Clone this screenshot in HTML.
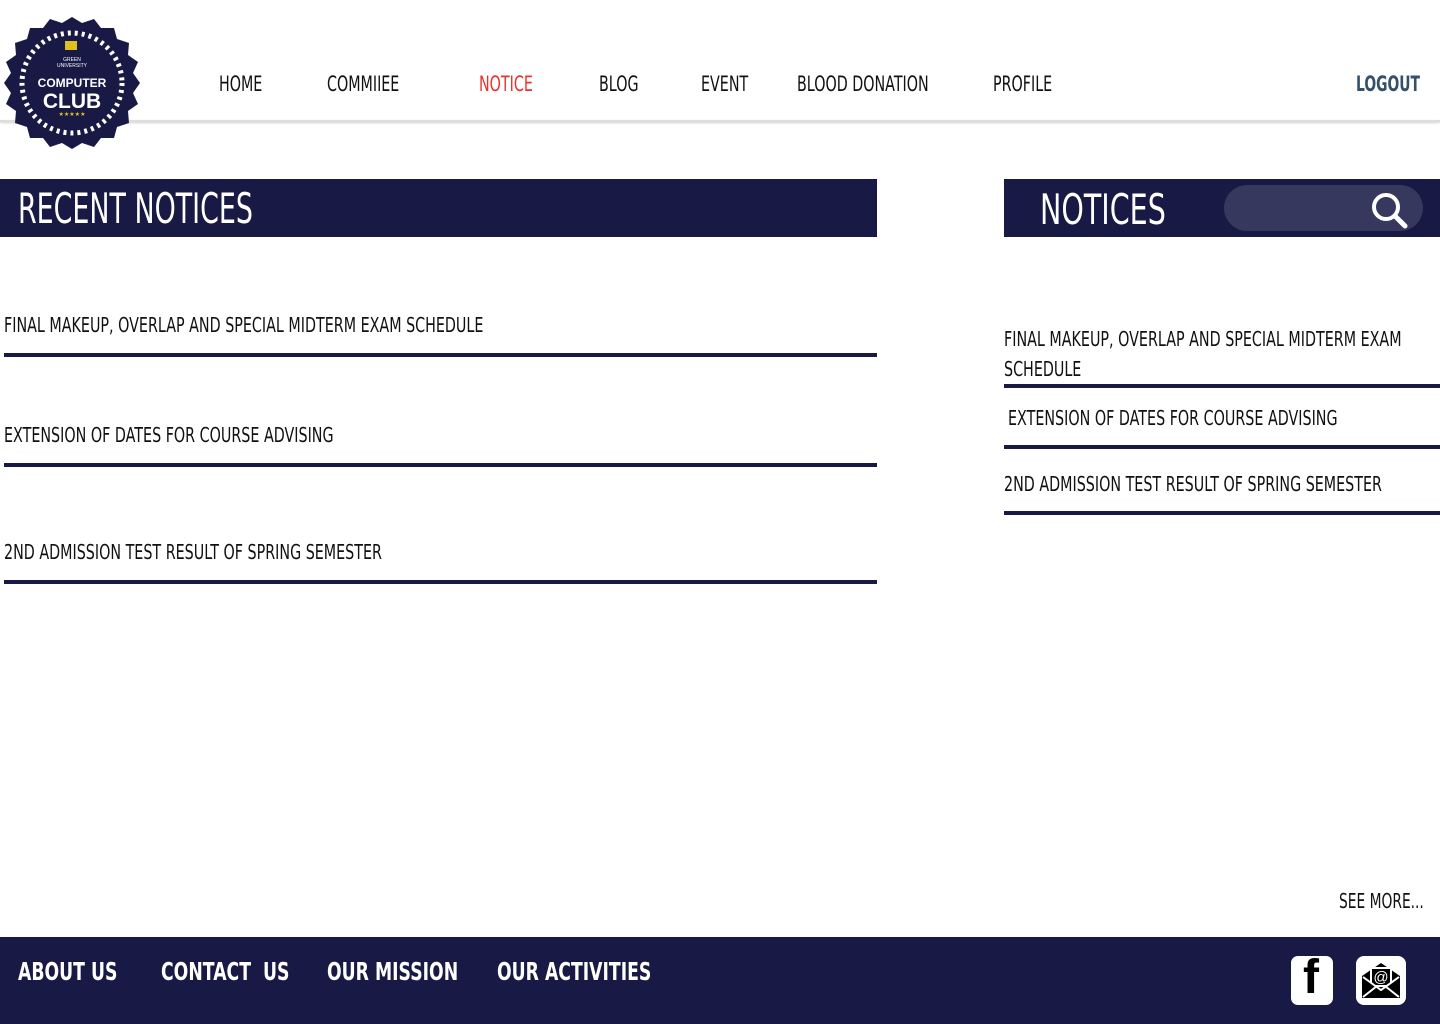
<!DOCTYPE html>
<html><head><meta charset="utf-8"><style>
*{margin:0;padding:0;box-sizing:border-box}
body{width:1440px;height:1024px;position:relative;background:#fff;overflow:hidden;font-family:"DejaVu Sans",sans-serif;color:#111}
.a{position:absolute;white-space:nowrap;transform-origin:0 0}
.nav{top:72px;font-size:21px;transform:scaleX(0.68)}
.bar{position:absolute;background:#181945}
.line{position:absolute;height:4px;background:#181945}
.it{font-size:20px;position:absolute;white-space:nowrap;transform:scaleX(0.715);transform-origin:0 0}
.ft{color:#fff;font-weight:bold;font-size:25px;top:957px;transform:scaleX(0.69)}
</style></head><body>
<div style="position:absolute;left:0;top:120px;width:1440px;height:2px;background:#ddd;box-shadow:0 1px 2px #ccc"></div>
<svg class="a" style="left:0;top:15px" width="144" height="136" viewBox="0 0 144 136">
<polygon fill="#181945" points="72,2 82,8 94,4 101,13 114,13 117,24 129,28 128,40 138,47 133,58 140,68 133,78 138,89 128,96 129,108 117,112 114,123 101,123 94,132 82,128 72,134 62,128 50,132 43,123 30,123 27,112 15,108 16,96 6,89 11,78 4,68 11,58 6,47 16,40 15,28 27,24 30,13 43,13 50,4 62,8"/>
<circle cx="72" cy="68" r="50" fill="none" stroke="#fff" stroke-width="5" stroke-dasharray="3 4"/>
<rect x="65" y="26" width="12" height="9" fill="#e0c020"/>
<text x="72" y="46" fill="#fff" font-size="5" text-anchor="middle" font-family="Liberation Sans">GREEN</text>
<text x="72" y="52" fill="#fff" font-size="5" text-anchor="middle" font-family="Liberation Sans">UNIVERSITY</text>
<text x="72" y="72" fill="#fff" font-size="12" font-weight="bold" text-anchor="middle" font-family="Liberation Sans">COMPUTER</text>
<text x="72" y="93" fill="#fff" font-size="21" font-weight="bold" text-anchor="middle" font-family="Liberation Sans">CLUB</text>
<text x="72" y="101" fill="#e0c020" font-size="6" text-anchor="middle">★★★★★</text>
</svg>
<div class="a nav" style="left:219px">HOME</div>
<div class="a nav" style="left:327px">COMMIIEE</div>
<div class="a nav" style="left:479px;color:#e8332c">NOTICE</div>
<div class="a nav" style="left:599px">BLOG</div>
<div class="a nav" style="left:701px">EVENT</div>
<div class="a nav" style="left:797px">BLOOD DONATION</div>
<div class="a nav" style="left:993px">PROFILE</div>
<div class="a nav" style="left:1356px;color:#34506a;font-weight:bold;transform:scaleX(0.66)">LOGOUT</div>

<div class="bar" style="left:0;top:179px;width:877px;height:58px"></div>
<div class="a" style="left:18px;top:184px;color:#fff;font-size:42px;transform:scaleX(0.64)">RECENT NOTICES</div>
<div class="it" style="left:4px;top:313px">FINAL MAKEUP, OVERLAP AND SPECIAL MIDTERM EXAM SCHEDULE</div>
<div class="line" style="left:4px;top:353px;width:873px"></div>
<div class="it" style="left:4px;top:423px">EXTENSION OF DATES FOR COURSE ADVISING</div>
<div class="line" style="left:4px;top:463px;width:873px"></div>
<div class="it" style="left:4px;top:540px">2ND ADMISSION TEST RESULT OF SPRING SEMESTER</div>
<div class="line" style="left:4px;top:580px;width:873px"></div>

<div class="bar" style="left:1004px;top:179px;width:436px;height:58px"></div>
<div class="a" style="left:1040px;top:185px;color:#fff;font-size:42px;transform:scaleX(0.68)">NOTICES</div>
<div class="a" style="left:1224px;top:185px;width:199px;height:46px;border-radius:23px;background:#37385e"></div>
<svg class="a" style="left:1368px;top:189px" width="42" height="40" viewBox="0 0 42 40"><circle cx="18" cy="18" r="12" fill="none" stroke="#fff" stroke-width="4"/><line x1="27" y1="27" x2="37" y2="37" stroke="#fff" stroke-width="5" stroke-linecap="round"/></svg>
<div class="it" style="left:1004px;top:324px;line-height:30px">FINAL MAKEUP, OVERLAP AND SPECIAL MIDTERM EXAM<br>SCHEDULE</div>
<div class="line" style="left:1004px;top:384px;width:436px"></div>
<div class="it" style="left:1008px;top:406px">EXTENSION OF DATES FOR COURSE ADVISING</div>
<div class="line" style="left:1004px;top:445px;width:436px"></div>
<div class="it" style="left:1004px;top:472px">2ND ADMISSION TEST RESULT OF SPRING SEMESTER</div>
<div class="line" style="left:1004px;top:511px;width:436px"></div>
<div class="it" style="left:1339px;top:889px;transform:scaleX(0.69)">SEE MORE...</div>

<div class="bar" style="left:0;top:937px;width:1440px;height:87px"></div>
<div class="a ft" style="left:18px">ABOUT US</div>
<div class="a ft" style="left:161px">CONTACT&nbsp; US</div>
<div class="a ft" style="left:327px">OUR MISSION</div>
<div class="a ft" style="left:497px">OUR ACTIVITIES</div>
<div class="a" style="left:1291px;top:956px;width:42px;height:49px;background:#fff;border-radius:7px"></div>
<div class="a" style="left:1303px;top:950px;font-family:'Liberation Sans';font-weight:bold;font-size:48px;color:#000">f</div>
<div class="a" style="left:1356px;top:956px;width:50px;height:49px;background:#fff;border-radius:8px"></div>
<svg class="a" style="left:1360px;top:960px" width="42" height="42" viewBox="0 0 42 42"><polygon points="2,16 21,3 40,16 40,38 2,38" fill="#000"/><rect x="10" y="7" width="22" height="20" fill="#fff"/><rect x="12" y="9" width="18" height="16" fill="#000"/><text x="21" y="22" fill="#fff" font-size="15" text-anchor="middle" font-family="Liberation Sans">@</text><polygon points="2,16 21,30 40,16 40,38 2,38" fill="#000"/><path d="M3,37 L17,26 M39,37 L25,26 M3,17 L21,30 L39,17" stroke="#fff" stroke-width="2" fill="none"/></svg>
</body></html>
